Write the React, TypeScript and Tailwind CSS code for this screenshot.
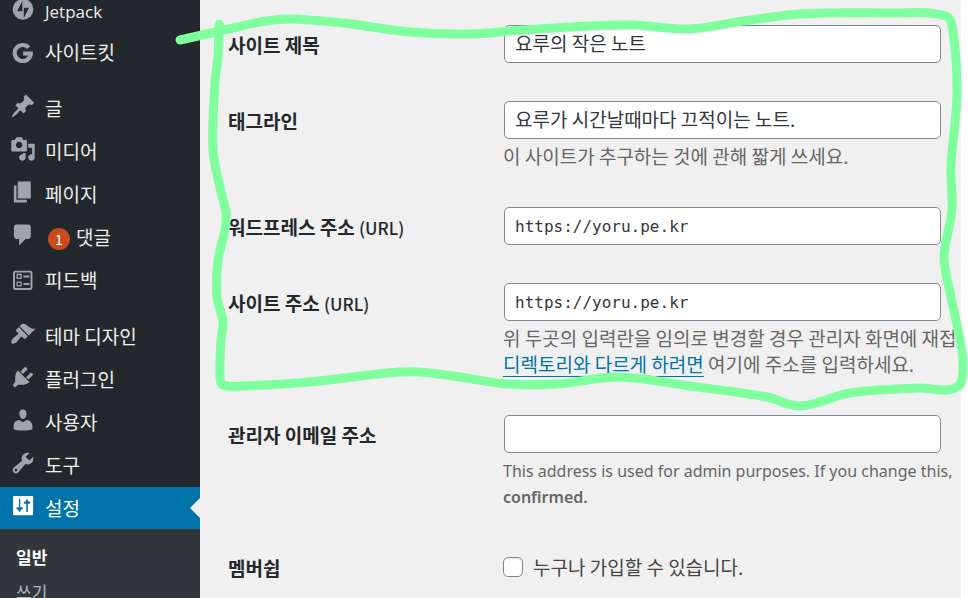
import type { ReactNode } from "react";

const glyphs: Record<string, ReactNode> = {
  jetpack: (
    <>
      <circle cx="10" cy="11.9" r="8" />
      <path className="fill-[#23282d]" d="M9.5 5.4v7.8H5.5zM10.6 10.6h4L10.6 18.4z" />
    </>
  ),
  google: <path fill="none" stroke="currentColor" strokeWidth="3.2" d="M14.4 8.2A6.2 6.2 0 1 0 16 12.7H10.1" />,
  post: (
    <path d="M10.44 3.02l1.82-1.82 6.36 6.35-1.83 1.82c-1.05-.68-2.48-.57-3.41.36l-.75.75c-.92.93-1.04 2.35-.35 3.41l-1.83 1.82-2.41-2.41-2.8 2.79c-.42.42-3.38 2.71-3.8 2.29s1.86-3.39 2.28-3.81l2.79-2.79L4.1 9.36l1.83-1.82c1.05.69 2.48.57 3.4-.36l.75-.75c.93-.92 1.05-2.35.36-3.41z" />
  ),
  media: (
    <path d="M13 11V4c0-.55-.45-1-1-1h-1.67L9 1H5L3.67 3H2c-.55 0-1 .45-1 1v7c0 .55.45 1 1 1h10c.55 0 1-.45 1-1zM7 4.5c1.38 0 2.5 1.12 2.5 2.5S8.38 9.5 7 9.5 4.5 8.38 4.5 7 5.62 4.5 7 4.5zM14 6h5v10.5c0 1.38-1.12 2.5-2.5 2.5S14 17.88 14 16.5s1.12-2.5 2.5-2.5c.17 0 .34.02.5.05V9h-3V6zm-4 8.05V13h2v3.5c0 1.38-1.12 2.5-2.5 2.5S7 17.88 7 16.5 8.12 14 9.5 14c.17 0 .34.02.5.05z" />
  ),
  page: <path d="M6 15V2h10v13H6zm-1 1h8v2H3V5h2v11z" />,
  comment: <path d="M5 2h9c1.1 0 2 .9 2 2v7c0 1.1-.9 2-2 2h-2l-5 5v-5H5c-1.1 0-2-.9-2-2V4c0-1.1.9-2 2-2z" />,
  feedback: (
    <>
      <rect x="3.1" y="5.1" width="13.4" height="13.4" rx="1" fill="none" stroke="currentColor" strokeWidth="1.5" />
      <path fill="none" stroke="currentColor" d="M5.5 7.3h3v3h-3zM5.5 13.1h3v3h-3z" />
      <path d="M10.3 8.1h4.6v1.5h-4.6zM10.3 13.9h4.6v1.5h-4.6z" />
    </>
  ),
  appearance: (
    <path d="M14.48 11.06L7.41 3.99l1.5-1.5c.5-.56 2.3-.47 3.51.32 1.21.8 1.43 1.28 2.91 2.1 1.18.64 2.45 1.26 4.45.85zm-.71.71L6.7 4.7 4.93 6.47c-.39.39-.39 1.02 0 1.41l1.06 1.06c.39.39.39 1.03 0 1.42-.6.6-1.43 1.11-2.21 1.69-.35.26-.7.53-1.01.84C1.43 14.23.4 16.08 1.4 17.07c.99 1 2.84-.03 4.18-1.36.31-.31.58-.66.85-1.02.57-.78 1.08-1.61 1.69-2.21.39-.39 1.02-.39 1.41 0l1.06 1.06c.39.39 1.02.39 1.41 0z" />
  ),
  plugin: (
    <path d="M13.11 4.36L9.87 7.6 8 5.73l3.24-3.24c.35-.34 1.05-.2 1.56.32.52.51.66 1.21.31 1.55zm-8 1.77l.91-1.12 9.01 9.01-1.19.84c-.71.71-2.63 1.16-3.82 1.16H6.14L4.9 17.26c-.59.59-1.54.59-2.12 0-.59-.58-.59-1.53 0-2.12l1.24-1.24v-3.88c0-1.13.4-3.19 1.09-3.89zm7.26 3.97l3.24-3.24c.34-.35 1.04-.21 1.55.31.52.51.66 1.21.31 1.55l-3.24 3.25z" />
  ),
  user: (
    <path d="M10 9.25c-2.27 0-2.73-3.44-2.73-3.44C7 4.02 7.82 2 9.97 2c2.16 0 2.98 2.02 2.71 3.81 0 0-.41 3.44-2.68 3.44zm0 2.57L12.72 10c2.39 0 4.52 2.33 4.52 4.53v2.49s-3.65 1.13-7.24 1.13c-3.65 0-7.24-1.13-7.24-1.13v-2.49c0-2.25 1.94-4.48 4.47-4.48z" />
  ),
  tools: (
    <path d="M16.68 9.77c-1.34 1.34-3.3 1.67-4.95.99l-5.41 6.52c-.99.99-2.59.99-3.58 0s-.99-2.59 0-3.57l6.52-5.42c-.68-1.65-.35-3.61.99-4.95 1.28-1.28 3.12-1.62 4.72-1.06l-2.89 2.89 2.82 2.82 2.86-2.87c.53 1.58.18 3.39-1.08 4.65zM3.81 16.21c.4.39 1.04.39 1.43 0 .4-.4.4-1.04 0-1.43-.39-.4-1.03-.4-1.43 0-.39.39-.39 1.03 0 1.43z" />
  ),
  settings: (
    <path d="M17.8 16.2V3.2c0-.55-.35-.9-.9-.9H3.2c-.55 0-.9.35-.9.9v13c0 .55.35.9.9.9h13.7c.55 0 .9-.35.9-.9zM7.9 11h1c.55 0 1 .35 1 .8s-.45.8-1 .8h-.2L7.4 15l-1.3-2.4h-.2c-.55 0-1-.35-1-.8s.45-.8 1-.8h1V4.9c0-.28.22-.5.5-.5s.5.22.5.5V11zm4.6-2.7h-1c-.55 0-1-.35-1-.8s.45-.8 1-.8h.3l1.3-2.3 1.3 2.3h.3c.55 0 1 .35 1 .8s-.45.8-1 .8h-1v6c0 .28-.22.5-.6.5s-.6-.22-.6-.5v-6z" />
  ),
};

type Item = { icon: string; label: string; badge?: number };

const menuGroups: Item[][] = [
  [
    { icon: "jetpack", label: "Jetpack" },
    { icon: "google", label: "사이트킷" },
  ],
  [
    { icon: "post", label: "글" },
    { icon: "media", label: "미디어" },
    { icon: "page", label: "페이지" },
    { icon: "comment", label: "댓글", badge: 1 },
    { icon: "feedback", label: "피드백" },
  ],
  [
    { icon: "appearance", label: "테마 디자인" },
    { icon: "plugin", label: "플러그인" },
    { icon: "user", label: "사용자" },
    { icon: "tools", label: "도구" },
  ],
];

function Glyph({ name }: { name: string }) {
  return (
    <svg viewBox="0 0 20 20" className="mt-1.5 mr-[9px] size-[26px] shrink-0 self-start" fill="currentColor" aria-hidden="true">
      {glyphs[name]}
    </svg>
  );
}

function MenuItem({ icon, label, badge }: Item) {
  const latin = /^[A-Za-z]+$/.test(label);
  return (
    <li>
      <a href="#" className="flex h-[43px] items-center pl-2.5 text-[#a0a5aa]">
        <Glyph name={icon} />
        {badge !== undefined && (
          <span className="mt-0.5 mr-1.5 ml-[3px] flex size-[22px] items-center justify-center rounded-full bg-[#ca4a1f] text-sm text-white">
            {badge}
          </span>
        )}
        <span className={latin ? "mt-1 font-['Open_Sans',sans-serif] text-[17px] text-[#eee]" : "text-[#eee]"}>{label}</span>
      </a>
    </li>
  );
}

function Sidebar() {
  return (
    <nav className="w-[200px] shrink-0 bg-[#23282d]">
      <div className="-mt-3 flex flex-col gap-[13px]">
        {menuGroups.map((group, i) => (
          <ul key={i}>
            {group.map((item) => (
              <MenuItem key={item.label} {...item} />
            ))}
          </ul>
        ))}
      </div>
      <a href="#" aria-current="page" className="flex h-[42px] items-center bg-[#0073aa] pl-2.5 text-white">
        <Glyph name="settings" />
        설정
        <span className="ml-auto border-y-10 border-r-10 border-y-transparent border-r-[#f0f0f0]" />
      </a>
      <ul className="bg-[#32373c] py-2.5 text-[17px]">
        <li>
          <a href="#" className="block pl-4 leading-[35px] font-bold text-white">
            일반
          </a>
        </li>
        <li>
          <a href="#" className="block pl-4 leading-[35px] text-[#b4b9be]">
            쓰기
          </a>
        </li>
      </ul>
    </nav>
  );
}

function Row({ id, label, suffix, children }: { id: string; label: string; suffix?: string; children: ReactNode }) {
  return (
    <div className="grid grid-cols-[275px_minmax(0,1fr)]">
      <label htmlFor={id} className="pt-[7px] leading-[26px] font-bold text-[#23282d]">
        {label} {suffix && <span className="text-[17px] font-medium">{suffix}</span>}
      </label>
      <div className="overflow-hidden">{children}</div>
    </div>
  );
}

function TextField({ id, value, code }: { id: string; value: string; code?: boolean }) {
  const base = "block h-[38px] w-full rounded-[5px] border border-[#7e8993] bg-white px-2.5 text-[#32373c]";
  return (
    <div className="pr-5 pl-px">
      <input
        id={id}
        type="text"
        defaultValue={value}
        className={code ? `${base} font-['DejaVu_Sans_Mono',monospace] text-base` : `${base} pb-[3px]`}
      />
    </div>
  );
}

function Description({ latin, children }: { latin?: boolean; children: ReactNode }) {
  const base = "whitespace-nowrap text-[#666]";
  return (
    <p className={latin ? `${base} mt-[5px] font-['Noto_Sans',sans-serif] text-base/[26px]` : `${base} mt-1 leading-[26px]`}>
      {children}
    </p>
  );
}

const outline: [number, number][] = [
  [180, 40], [220, 31], [260, 22], [288, 19], [343, 23], [410, 32], [470, 34], [523, 30], [590, 26], [633, 25],
  [690, 29], [743, 21], [800, 14], [890, 13], [946, 16], [953, 32], [957, 93], [951, 167], [952, 210], [944, 257],
  [951, 297], [958, 330], [963, 363], [957, 387], [917, 388], [850, 393], [800, 406], [767, 397], [690, 386],
  [618, 377], [557, 384], [507, 384], [460, 377], [420, 372], [387, 373], [310, 382], [243, 386], [223, 385],
  [220, 377], [221, 340], [223, 322], [217, 297], [218, 260], [225, 230], [226, 213], [221, 192], [213, 150],
  [215, 83], [218, 57], [219, 24],
];

// Smooth curve through every point (Catmull-Rom converted to cubic segments).
function smoothPath(pts: [number, number][]) {
  let d = `M${pts[0][0]} ${pts[0][1]}`;
  for (let i = 0; i < pts.length - 1; i++) {
    const p1 = pts[i];
    const p2 = pts[i + 1];
    const p0 = pts[i - 1] ?? p1;
    const p3 = pts[i + 2] ?? p2;
    const len = Math.hypot(p2[0] - p1[0], p2[1] - p1[1]);
    const k1 = len / (Math.hypot(p2[0] - p0[0], p2[1] - p0[1]) * 3);
    const k2 = len / (Math.hypot(p3[0] - p1[0], p3[1] - p1[1]) * 3);
    d += ` C${p1[0] + (p2[0] - p0[0]) * k1} ${p1[1] + (p2[1] - p0[1]) * k1} ${p2[0] - (p3[0] - p1[0]) * k2} ${p2[1] - (p3[1] - p1[1]) * k2} ${p2[0]} ${p2[1]}`;
  }
  return d;
}

export default function App() {
  return (
    <div className="relative flex h-screen overflow-hidden bg-white pr-[7px] font-['Noto_Sans_CJK_KR',sans-serif] text-[19px]">
      <Sidebar />
      <main className="min-w-0 flex-1 bg-[#f0f0f0] pt-[25px] pl-7">
        <form className="flex flex-col gap-[38px]">
          <Row id="title" label="사이트 제목">
            <TextField id="title" value="요루의 작은 노트" />
          </Row>
          <Row id="tagline" label="태그라인">
            <TextField id="tagline" value="요루가 시간날때마다 끄적이는 노트." />
            <Description>이 사이트가 추구하는 것에 관해 짧게 쓰세요.</Description>
          </Row>
          <Row id="wpurl" label="워드프레스 주소" suffix="(URL)">
            <TextField id="wpurl" value="https://yoru.pe.kr" code />
          </Row>
          <Row id="siteurl" label="사이트 주소" suffix="(URL)">
            <TextField id="siteurl" value="https://yoru.pe.kr" code />
            <Description>
              위 두곳의 입력란을 임의로 변경할 경우 관리자 화면에 재접
              <br />
              <a href="#" className="text-[#0073aa] underline decoration-1 underline-offset-4">
                디렉토리와 다르게 하려면
              </a>{" "}
              여기에 주소를 입력하세요.
            </Description>
          </Row>
          <Row id="email" label="관리자 이메일 주소">
            <TextField id="email" value="" />
            <Description latin>
              This address is used for admin purposes. If you change this,
              <br />
              <strong className="font-semibold">confirmed.</strong>
            </Description>
          </Row>
          <Row id="membership" label="멤버쉽">
            <div className="flex h-[38px] items-center gap-2.5">
              <input
                id="membership"
                type="checkbox"
                className="size-5 appearance-none rounded-[5px] border border-[#7e8993] bg-white shadow-[inset_0_1px_2px_rgba(0,0,0,0.1)]"
              />
              <label htmlFor="membership" className="text-[#444]">
                누구나 가입할 수 있습니다.
              </label>
            </div>
          </Row>
        </form>
      </main>
      <svg className="pointer-events-none absolute top-0 left-0 h-[598px] w-[968px]" viewBox="0 0 968 598" fill="none" aria-hidden="true">
        <path d={smoothPath(outline)} stroke="#80ff9f" strokeWidth="9" strokeLinecap="round" strokeLinejoin="round" />
      </svg>
    </div>
  );
}
